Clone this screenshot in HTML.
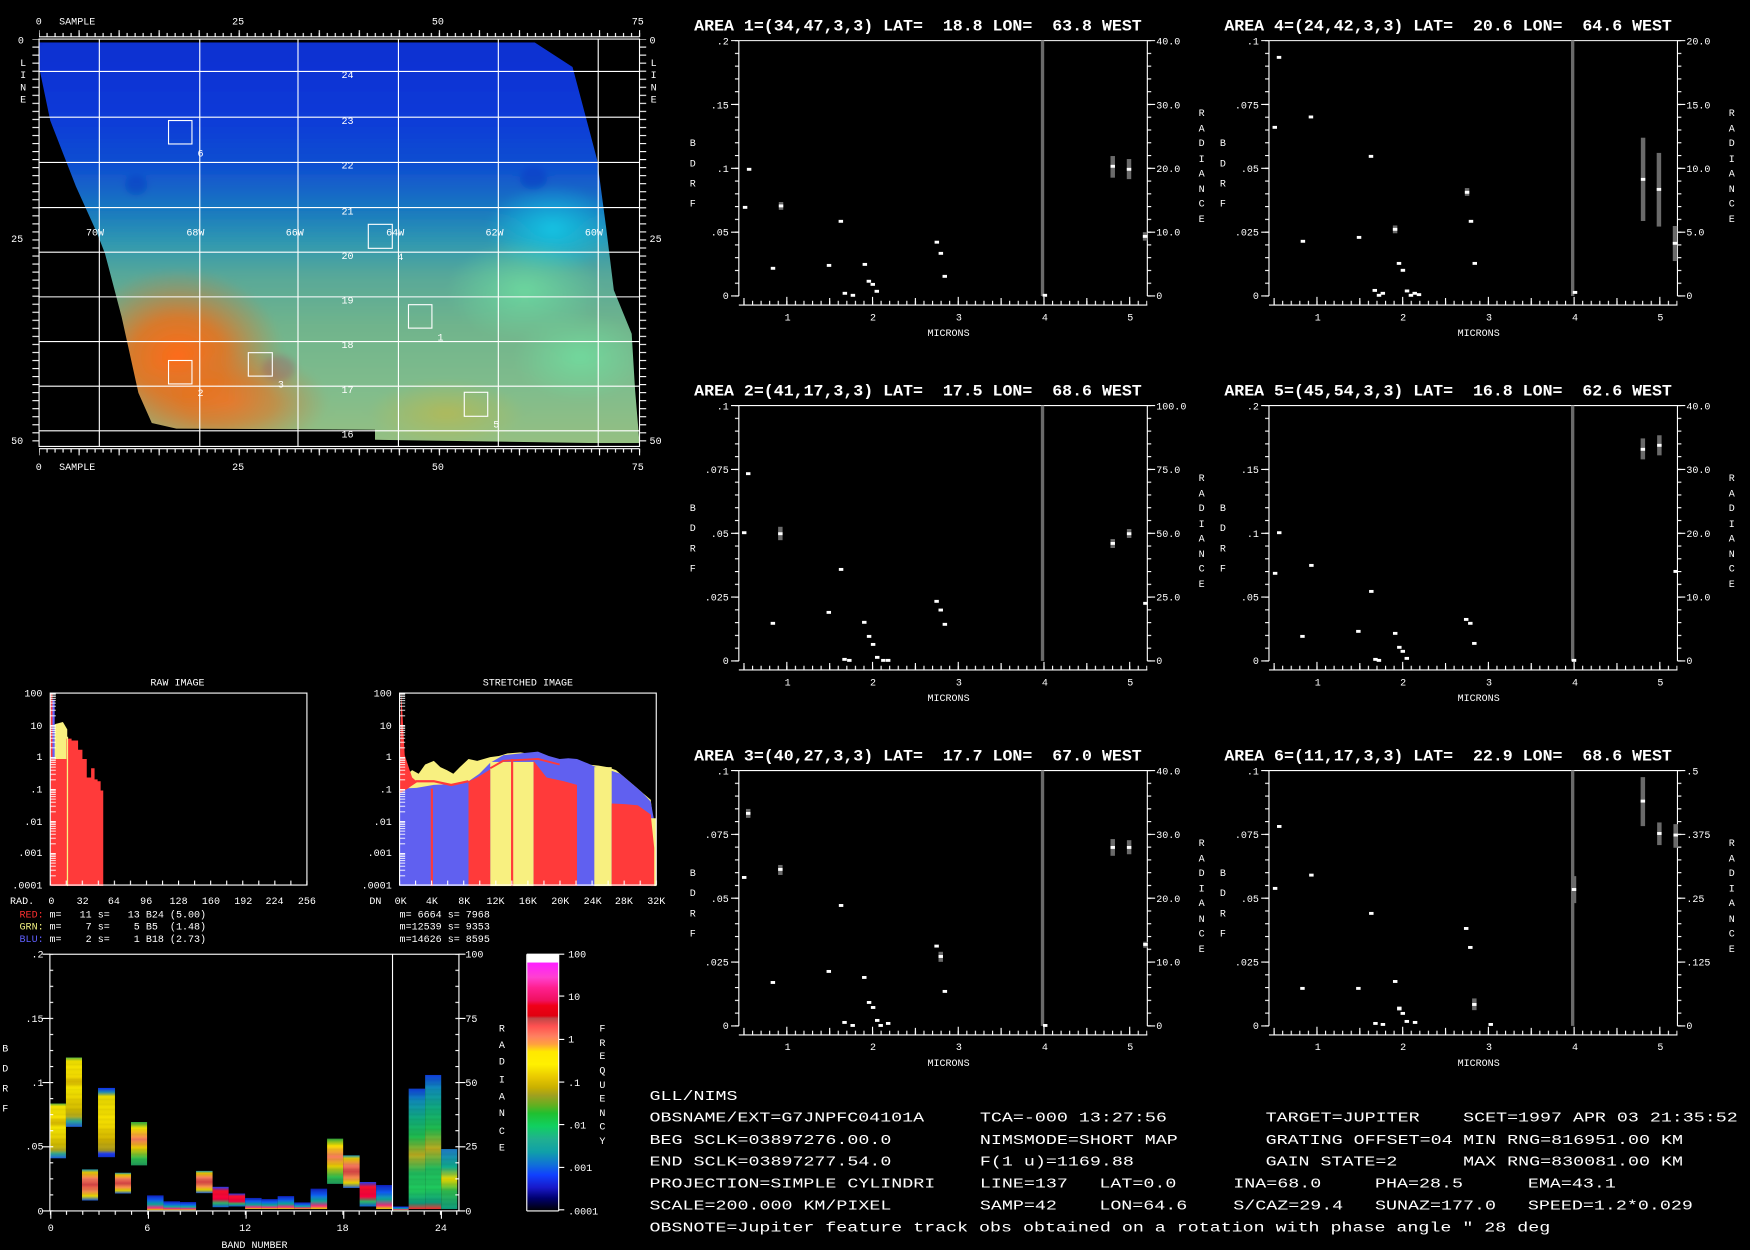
<!DOCTYPE html>
<html><head><meta charset="utf-8">
<style>
html,body{margin:0;padding:0;background:#000;}
svg{display:block;}
text{font-family:"Liberation Mono","DejaVu Sans Mono",monospace;fill:#fff;white-space:pre;}
.t9{font-size:9px;}
.ti{font-size:14px;font-weight:bold;}
.bt{font-size:12px;}
</style></head>
<body>
<svg width="1750" height="1250" viewBox="0 0 1568 1120" xmlns="http://www.w3.org/2000/svg">
<defs>
 <pattern id="vt" patternUnits="userSpaceOnUse" x="0" y="35.9" width="10" height="11.44"><rect x="0" y="0" width="10" height="1" fill="#fff"/></pattern>
 <pattern id="ht" patternUnits="userSpaceOnUse" x="704.5" y="0" width="7.68" height="20"><rect x="0" y="0" width="1" height="20" fill="#fff"/></pattern>
 <pattern id="mt" patternUnits="userSpaceOnUse" x="34.5" y="0" width="7.173" height="20"><rect x="0" y="0" width="1" height="20" fill="#fff"/></pattern>
 <pattern id="mT" patternUnits="userSpaceOnUse" x="34.5" y="0" width="35.87" height="20"><rect x="0" y="0" width="1" height="20" fill="#fff"/></pattern>
 <pattern id="ml" patternUnits="userSpaceOnUse" x="0" y="34.5" width="20" height="7.2"><rect x="0" y="0" width="20" height="1" fill="#fff"/></pattern>
 <pattern id="lg" patternUnits="userSpaceOnUse" x="0" y="621" width="20" height="28.67">
  <rect x="0" y="0" width="20" height="1" fill="#fff"/>
  <rect x="0" y="1.3" width="20" height="0.8" fill="#fff"/><rect x="0" y="2.8" width="20" height="0.8" fill="#fff"/>
  <rect x="0" y="4.4" width="20" height="0.8" fill="#fff"/><rect x="0" y="6.4" width="20" height="0.8" fill="#fff"/>
  <rect x="0" y="8.6" width="20" height="0.8" fill="#fff"/><rect x="0" y="11.4" width="20" height="0.8" fill="#fff"/>
  <rect x="0" y="15" width="20" height="0.8" fill="#fff"/><rect x="0" y="20" width="20" height="0.8" fill="#fff"/>
 </pattern>
 <pattern id="hx" patternUnits="userSpaceOnUse" x="44.5" y="0" width="14.375" height="20"><rect x="0" y="0" width="1" height="20" fill="#fff"/></pattern>
 <pattern id="hx2" patternUnits="userSpaceOnUse" x="357.5" y="0" width="14.375" height="20"><rect x="0" y="0" width="1" height="20" fill="#fff"/></pattern>
 <pattern id="bx" patternUnits="userSpaceOnUse" x="44.5" y="0" width="14.57" height="20"><rect x="0" y="0" width="1" height="20" fill="#fff"/></pattern>
 <pattern id="by" patternUnits="userSpaceOnUse" x="0" y="854.5" width="20" height="14.375"><rect x="0" y="0" width="20" height="1" fill="#fff"/></pattern>
 <pattern id="stripe" patternUnits="userSpaceOnUse" x="0" y="0" width="10" height="3"><rect x="0" y="0" width="10" height="1" fill="#000" opacity="0.18"/></pattern>

 <linearGradient id="mapg" x1="0" y1="0" x2="0" y2="1">
  <stop offset="0" stop-color="#0a2ed0"/><stop offset="0.2" stop-color="#0c3ad8"/>
  <stop offset="0.32" stop-color="#1050d0"/><stop offset="0.42" stop-color="#1878c0"/>
  <stop offset="0.5" stop-color="#3098b0"/><stop offset="0.58" stop-color="#58a898"/>
  <stop offset="0.7" stop-color="#70b48c"/><stop offset="0.85" stop-color="#80bc8c"/>
  <stop offset="1" stop-color="#98c080"/>
 </linearGradient>
 <radialGradient id="org" cx="0.5" cy="0.5" r="0.5">
  <stop offset="0" stop-color="#ff6a18" stop-opacity="1"/><stop offset="0.45" stop-color="#e8701c" stop-opacity="0.85"/>
  <stop offset="1" stop-color="#c88040" stop-opacity="0"/>
 </radialGradient>
 <radialGradient id="cyn" cx="0.5" cy="0.5" r="0.5">
  <stop offset="0" stop-color="#10c8e8" stop-opacity="0.9"/><stop offset="1" stop-color="#10c8e8" stop-opacity="0"/>
 </radialGradient>
 <radialGradient id="lgr" cx="0.5" cy="0.5" r="0.5">
  <stop offset="0" stop-color="#70e0a0" stop-opacity="0.8"/><stop offset="1" stop-color="#70e0a0" stop-opacity="0"/>
 </radialGradient>
 <radialGradient id="ylw" cx="0.5" cy="0.5" r="0.5">
  <stop offset="0" stop-color="#b8b850" stop-opacity="0.8"/><stop offset="1" stop-color="#b8b850" stop-opacity="0"/>
 </radialGradient>
 <filter id="bl" x="-5%" y="-5%" width="110%" height="110%"><feGaussianBlur stdDeviation="3"/></filter>
 <clipPath id="mc"><polygon points="35,38 479,38 513,60 535,143 543,203 550,260 566,299 569,349 573,397 535,397 336,394 336,385 158,384 136,379 124,352 109,284 94,227 87,209 68,167 45,108 35,60"/></clipPath>

 <linearGradient id="cb" x1="0" y1="0" x2="0" y2="1">
  <stop offset="0" stop-color="#fff"/><stop offset="0.03" stop-color="#fff"/>
  <stop offset="0.035" stop-color="#ff20ff"/><stop offset="0.09" stop-color="#ff40d0"/>
  <stop offset="0.13" stop-color="#ff2090"/><stop offset="0.18" stop-color="#f01060"/>
  <stop offset="0.2" stop-color="#f00018"/><stop offset="0.24" stop-color="#e00010"/>
  <stop offset="0.25" stop-color="#c04848"/><stop offset="0.28" stop-color="#ff5050"/>
  <stop offset="0.32" stop-color="#ff8060"/><stop offset="0.35" stop-color="#ffa040"/>
  <stop offset="0.38" stop-color="#ffe800"/><stop offset="0.43" stop-color="#fff000"/>
  <stop offset="0.48" stop-color="#e8c800"/><stop offset="0.52" stop-color="#c8b000"/>
  <stop offset="0.55" stop-color="#a0a020"/><stop offset="0.59" stop-color="#60b020"/>
  <stop offset="0.62" stop-color="#20c030"/><stop offset="0.67" stop-color="#10d060"/>
  <stop offset="0.72" stop-color="#20b090"/><stop offset="0.77" stop-color="#10a0a8"/>
  <stop offset="0.82" stop-color="#1070d8"/><stop offset="0.86" stop-color="#1040ff"/>
  <stop offset="0.91" stop-color="#1818c8"/><stop offset="0.95" stop-color="#000070"/>
  <stop offset="1" stop-color="#000"/>
 </linearGradient>
 <linearGradient id="gy" x1="0" y1="0" x2="0" y2="1">
  <stop offset="0" stop-color="#60c040"/><stop offset="0.05" stop-color="#f8e800"/>
  <stop offset="0.25" stop-color="#ffe800"/><stop offset="0.35" stop-color="#e0c000"/>
  <stop offset="0.45" stop-color="#fff000"/><stop offset="0.6" stop-color="#f0d800"/>
  <stop offset="0.75" stop-color="#d8c000"/><stop offset="0.85" stop-color="#b8b020"/>
  <stop offset="0.92" stop-color="#30b0a0"/><stop offset="1" stop-color="#2060e0"/>
 </linearGradient>
 <linearGradient id="gb" x1="0" y1="0" x2="0" y2="1">
  <stop offset="0" stop-color="#1030ff"/><stop offset="0.06" stop-color="#2090c0"/>
  <stop offset="0.12" stop-color="#f0e000"/><stop offset="0.5" stop-color="#ffe800"/>
  <stop offset="0.75" stop-color="#d8b800"/><stop offset="0.9" stop-color="#b0a020"/>
  <stop offset="0.95" stop-color="#2040ff"/><stop offset="1" stop-color="#1030d0"/>
 </linearGradient>
 <linearGradient id="gs" x1="0" y1="0" x2="0" y2="1">
  <stop offset="0" stop-color="#20a0c0"/><stop offset="0.1" stop-color="#f0d000"/>
  <stop offset="0.3" stop-color="#ff8060"/><stop offset="0.5" stop-color="#e04848"/>
  <stop offset="0.7" stop-color="#ff9050"/><stop offset="0.85" stop-color="#f0e000"/>
  <stop offset="1" stop-color="#2060e0"/>
 </linearGradient>
 <linearGradient id="gr" x1="0" y1="0" x2="0" y2="1">
  <stop offset="0" stop-color="#2040ff"/><stop offset="0.2" stop-color="#ff1030"/>
  <stop offset="0.6" stop-color="#ff0040"/><stop offset="0.8" stop-color="#30c070"/>
  <stop offset="1" stop-color="#1060e0"/>
 </linearGradient>
 <linearGradient id="gl" x1="0" y1="0" x2="0" y2="1">
  <stop offset="0" stop-color="#1020c0"/><stop offset="0.3" stop-color="#1060ff"/>
  <stop offset="0.6" stop-color="#10b0a0"/><stop offset="0.85" stop-color="#ff3080"/>
  <stop offset="1" stop-color="#f0e000"/>
 </linearGradient>
 <linearGradient id="gg" x1="0" y1="0" x2="0" y2="1">
  <stop offset="0" stop-color="#1040e0"/><stop offset="0.1" stop-color="#1090c0"/>
  <stop offset="0.25" stop-color="#10b080"/><stop offset="0.4" stop-color="#20c050"/>
  <stop offset="0.55" stop-color="#c0b020"/><stop offset="0.7" stop-color="#20c060"/>
  <stop offset="0.85" stop-color="#20d060"/><stop offset="0.95" stop-color="#10a080"/>
  <stop offset="1" stop-color="#ff3030"/>
 </linearGradient>
 <linearGradient id="gg2" x1="0" y1="0" x2="0" y2="1">
  <stop offset="0" stop-color="#2080d0"/><stop offset="0.3" stop-color="#10b090"/>
  <stop offset="0.5" stop-color="#f0e000"/><stop offset="0.7" stop-color="#30c050"/>
  <stop offset="1" stop-color="#10a080"/>
 </linearGradient>
 <linearGradient id="go" x1="0" y1="0" x2="0" y2="1">
  <stop offset="0" stop-color="#30b040"/><stop offset="0.15" stop-color="#ffe800"/>
  <stop offset="0.4" stop-color="#ff8060"/><stop offset="0.6" stop-color="#f0d000"/>
  <stop offset="0.85" stop-color="#30c050"/><stop offset="1" stop-color="#20a060"/>
 </linearGradient>

 <g id="pf">
  <path d="M662 36.4H1028V265.2M662 36.4V265.2M662 273.3H1028" stroke="#fff" stroke-width="1" fill="none"/>
  <path d="M655 36.4h7M655 93.6h7M655 150.8h7M655 208h7M655 265.2h7M1028 36.4h7M1028 93.6h7M1028 150.8h7M1028 208h7M1028 265.2h7" stroke="#fff" stroke-width="1"/>
  <rect x="658.5" y="36" width="3.5" height="230" fill="url(#vt)"/>
  <rect x="1028" y="36" width="3.5" height="230" fill="url(#vt)"/>
  <rect x="662" y="269.5" width="366" height="3.8" fill="url(#ht)"/>
  <path d="M705 266v7M781.8 266v7M858.6 266v7M935.4 266v7M1012.2 266v7M666.6 267v6M743.4 267v6M820.2 267v6M897 267v6M973.8 267v6" stroke="#fff" stroke-width="1"/>
  <rect x="932.6" y="36.4" width="3" height="228.8" fill="#6a6a6a"/>
 </g>
 <rect id="p" x="-2" y="-1.3" width="4" height="2.6" fill="#fff"/>
</defs>

<!-- ================= MAP ================= -->
<g clip-path="url(#mc)">
 <g filter="url(#bl)">
  <rect x="30" y="30" width="550" height="375" fill="url(#mapg)"/>
  <ellipse cx="160" cy="320" rx="95" ry="80" fill="url(#org)"/>
  <ellipse cx="205" cy="360" rx="90" ry="45" fill="url(#org)" opacity="0.7"/>
  <ellipse cx="495" cy="205" rx="60" ry="40" fill="url(#cyn)"/>
  <ellipse cx="470" cy="260" rx="70" ry="45" fill="url(#lgr)"/>
  <ellipse cx="520" cy="320" rx="60" ry="40" fill="url(#lgr)"/>
  <ellipse cx="400" cy="370" rx="70" ry="30" fill="url(#ylw)"/>
  <ellipse cx="478" cy="160" rx="12" ry="10" fill="#0020c0" opacity="0.3"/>
  <ellipse cx="122" cy="166" rx="10" ry="9" fill="#0020c0" opacity="0.3"/>
  <ellipse cx="250" cy="330" rx="15" ry="12" fill="#a05060" opacity="0.35"/>
 </g>
</g>
<g stroke="#fff" stroke-width="1" fill="none">
 <rect x="35" y="35" width="538" height="365"/>
 <path d="M35 64H573M35 105H573M35 145.5H573M35 186H573M35 226H573M35 266H573M35 306H573M35 346H573M35 386H573"/>
 <path d="M89 35V400M179 35V400M267 35V400M357 35V400M446.5 35V400M536 35V400"/>
 <path d="M35 33H573M35 402H573"/>
 <rect x="151" y="108" width="21" height="21"/><rect x="330" y="201" width="21.5" height="21.5"/>
 <rect x="366" y="273" width="21" height="21"/><rect x="151" y="323" width="21" height="21"/>
 <rect x="222.5" y="316" width="21.5" height="21"/><rect x="416" y="351.5" width="21" height="21.5"/>
</g>
<rect x="35" y="29.5" width="539" height="3.5" fill="url(#mt)"/>
<rect x="35" y="27" width="539" height="6" fill="url(#mT)"/>
<rect x="35" y="402" width="539" height="3.5" fill="url(#mt)"/>
<rect x="35" y="402" width="539" height="6" fill="url(#mT)"/>
<rect x="29" y="35" width="6" height="366" fill="url(#ml)"/>
<rect x="573" y="35" width="6" height="366" fill="url(#ml)"/>
<g class="t9">
 <text x="32" y="22">0</text><text x="53" y="22">SAMPLE</text><text x="208" y="22">25</text><text x="387" y="22">50</text><text x="566" y="22">75</text>
 <text x="32" y="421">0</text><text x="53" y="421">SAMPLE</text><text x="208" y="421">25</text><text x="387" y="421">50</text><text x="566" y="421">75</text>
 <text x="16" y="39">0</text><text x="10" y="217">25</text><text x="10" y="398">50</text>
 <text x="582" y="39">0</text><text x="582" y="217">25</text><text x="582" y="398">50</text>
 <text x="18" y="59">L</text><text x="18" y="70">I</text><text x="18" y="81">N</text><text x="18" y="92">E</text>
 <text x="583" y="59">L</text><text x="583" y="70">I</text><text x="583" y="81">N</text><text x="583" y="92">E</text>
 <text x="306" y="70">24</text><text x="306" y="111">23</text><text x="306" y="151">22</text><text x="306" y="192">21</text>
 <text x="306" y="232">20</text><text x="306" y="272">19</text><text x="306" y="312">18</text><text x="306" y="352">17</text><text x="306" y="392">16</text>
 <text x="77" y="211">70W</text><text x="167" y="211">68W</text><text x="256" y="211">66W</text><text x="346" y="211">64W</text><text x="435" y="211">62W</text><text x="524" y="211">60W</text>
 <text x="177" y="140">6</text><text x="356" y="233">4</text><text x="392" y="305">1</text>
 <text x="177" y="355">2</text><text x="249" y="347">3</text><text x="442" y="383">5</text>
</g>

<!-- ================= SPECTRAL PLOTS ================= -->
<use href="#pf"/>
<use href="#pf" transform="translate(475,0)"/>
<use href="#pf" transform="translate(0,327)"/>
<use href="#pf" transform="translate(475,327)"/>
<use href="#pf" transform="translate(0,654)"/>
<use href="#pf" transform="translate(475,654)"/>

<g class="ti">
 <text x="622" y="27.5" textLength="401" lengthAdjust="spacingAndGlyphs">AREA 1=(34,47,3,3) LAT=  18.8 LON=  63.8 WEST</text>
 <text x="1097" y="27.5" textLength="401" lengthAdjust="spacingAndGlyphs">AREA 4=(24,42,3,3) LAT=  20.6 LON=  64.6 WEST</text>
 <text x="622" y="354.5" textLength="401" lengthAdjust="spacingAndGlyphs">AREA 2=(41,17,3,3) LAT=  17.5 LON=  68.6 WEST</text>
 <text x="1097" y="354.5" textLength="401" lengthAdjust="spacingAndGlyphs">AREA 5=(45,54,3,3) LAT=  16.8 LON=  62.6 WEST</text>
 <text x="622" y="681.5" textLength="401" lengthAdjust="spacingAndGlyphs">AREA 3=(40,27,3,3) LAT=  17.7 LON=  67.0 WEST</text>
 <text x="1097" y="681.5" textLength="401" lengthAdjust="spacingAndGlyphs">AREA 6=(11,17,3,3) LAT=  22.9 LON=  68.6 WEST</text>
</g>

<g class="t9">
 <g text-anchor="end"><text x="653" y="40">.2</text><text x="653" y="97">.15</text><text x="653" y="154">.1</text><text x="653" y="211">.05</text><text x="653" y="268">0</text></g>
 <text x="1036" y="40">40.0</text><text x="1036" y="97">30.0</text><text x="1036" y="154">20.0</text><text x="1036" y="211">10.0</text><text x="1036" y="268">0</text>
 <g text-anchor="end"><text x="1128" y="40">.1</text><text x="1128" y="97">.075</text><text x="1128" y="154">.05</text><text x="1128" y="211">.025</text><text x="1128" y="268">0</text></g>
 <text x="1511" y="40">20.0</text><text x="1511" y="97">15.0</text><text x="1511" y="154">10.0</text><text x="1511" y="211">5.0</text><text x="1511" y="268">0</text>
 <g text-anchor="end"><text x="653" y="367">.1</text><text x="653" y="424">.075</text><text x="653" y="481">.05</text><text x="653" y="538">.025</text><text x="653" y="595">0</text></g>
 <text x="1036" y="367">100.0</text><text x="1036" y="424">75.0</text><text x="1036" y="481">50.0</text><text x="1036" y="538">25.0</text><text x="1036" y="595">0</text>
 <g text-anchor="end"><text x="1128" y="367">.2</text><text x="1128" y="424">.15</text><text x="1128" y="481">.1</text><text x="1128" y="538">.05</text><text x="1128" y="595">0</text></g>
 <text x="1511" y="367">40.0</text><text x="1511" y="424">30.0</text><text x="1511" y="481">20.0</text><text x="1511" y="538">10.0</text><text x="1511" y="595">0</text>
 <g text-anchor="end"><text x="653" y="694">.1</text><text x="653" y="751">.075</text><text x="653" y="808">.05</text><text x="653" y="865">.025</text><text x="653" y="922">0</text></g>
 <text x="1036" y="694">40.0</text><text x="1036" y="751">30.0</text><text x="1036" y="808">20.0</text><text x="1036" y="865">10.0</text><text x="1036" y="922">0</text>
 <g text-anchor="end"><text x="1128" y="694">.1</text><text x="1128" y="751">.075</text><text x="1128" y="808">.05</text><text x="1128" y="865">.025</text><text x="1128" y="922">0</text></g>
 <text x="1511" y="694">.5</text><text x="1511" y="751">.375</text><text x="1511" y="808">.25</text><text x="1511" y="865">.125</text><text x="1511" y="922">0</text>

 <g>
  <text x="703" y="287">1</text><text x="779.5" y="287">2</text><text x="856.5" y="287">3</text><text x="933.5" y="287">4</text><text x="1010" y="287">5</text>
  <text x="831" y="301">MICRONS</text>
  <text x="618" y="131">B</text><text x="618" y="149">D</text><text x="618" y="167">R</text><text x="618" y="185">F</text>
  <text x="1074" y="104">R</text><text x="1074" y="118">A</text><text x="1074" y="131">D</text><text x="1074" y="145">I</text><text x="1074" y="158">A</text><text x="1074" y="172">N</text><text x="1074" y="185">C</text><text x="1074" y="199">E</text>
 </g>
 <g transform="translate(475,0)">
  <text x="703" y="287">1</text><text x="779.5" y="287">2</text><text x="856.5" y="287">3</text><text x="933.5" y="287">4</text><text x="1010" y="287">5</text>
  <text x="831" y="301">MICRONS</text>
  <text x="618" y="131">B</text><text x="618" y="149">D</text><text x="618" y="167">R</text><text x="618" y="185">F</text>
  <text x="1074" y="104">R</text><text x="1074" y="118">A</text><text x="1074" y="131">D</text><text x="1074" y="145">I</text><text x="1074" y="158">A</text><text x="1074" y="172">N</text><text x="1074" y="185">C</text><text x="1074" y="199">E</text>
 </g>
 <g transform="translate(0,327)">
  <text x="703" y="287">1</text><text x="779.5" y="287">2</text><text x="856.5" y="287">3</text><text x="933.5" y="287">4</text><text x="1010" y="287">5</text>
  <text x="831" y="301">MICRONS</text>
  <text x="618" y="131">B</text><text x="618" y="149">D</text><text x="618" y="167">R</text><text x="618" y="185">F</text>
  <text x="1074" y="104">R</text><text x="1074" y="118">A</text><text x="1074" y="131">D</text><text x="1074" y="145">I</text><text x="1074" y="158">A</text><text x="1074" y="172">N</text><text x="1074" y="185">C</text><text x="1074" y="199">E</text>
 </g>
 <g transform="translate(475,327)">
  <text x="703" y="287">1</text><text x="779.5" y="287">2</text><text x="856.5" y="287">3</text><text x="933.5" y="287">4</text><text x="1010" y="287">5</text>
  <text x="831" y="301">MICRONS</text>
  <text x="618" y="131">B</text><text x="618" y="149">D</text><text x="618" y="167">R</text><text x="618" y="185">F</text>
  <text x="1074" y="104">R</text><text x="1074" y="118">A</text><text x="1074" y="131">D</text><text x="1074" y="145">I</text><text x="1074" y="158">A</text><text x="1074" y="172">N</text><text x="1074" y="185">C</text><text x="1074" y="199">E</text>
 </g>
 <g transform="translate(0,654)">
  <text x="703" y="287">1</text><text x="779.5" y="287">2</text><text x="856.5" y="287">3</text><text x="933.5" y="287">4</text><text x="1010" y="287">5</text>
  <text x="831" y="301">MICRONS</text>
  <text x="618" y="131">B</text><text x="618" y="149">D</text><text x="618" y="167">R</text><text x="618" y="185">F</text>
  <text x="1074" y="104">R</text><text x="1074" y="118">A</text><text x="1074" y="131">D</text><text x="1074" y="145">I</text><text x="1074" y="158">A</text><text x="1074" y="172">N</text><text x="1074" y="185">C</text><text x="1074" y="199">E</text>
 </g>
 <g transform="translate(475,654)">
  <text x="703" y="287">1</text><text x="779.5" y="287">2</text><text x="856.5" y="287">3</text><text x="933.5" y="287">4</text><text x="1010" y="287">5</text>
  <text x="831" y="301">MICRONS</text>
  <text x="618" y="131">B</text><text x="618" y="149">D</text><text x="618" y="167">R</text><text x="618" y="185">F</text>
  <text x="1074" y="104">R</text><text x="1074" y="118">A</text><text x="1074" y="131">D</text><text x="1074" y="145">I</text><text x="1074" y="158">A</text><text x="1074" y="172">N</text><text x="1074" y="185">C</text><text x="1074" y="199">E</text>
 </g>
</g>

<g fill="#6a6a6a">
 <rect x="697.8" y="181" width="4" height="7"/><rect x="995" y="139.8" width="4" height="19.4"/><rect x="1009.6" y="142.5" width="4" height="18"/><rect x="1024" y="208" width="4" height="7.6"/>
 <rect x="1248" y="202" width="4" height="7"/><rect x="1312.5" y="168.5" width="4" height="7"/><rect x="1470.2" y="123.4" width="4" height="74.6"/><rect x="1484.4" y="137" width="4" height="66"/><rect x="1498.8" y="202.5" width="4" height="31.4"/>
 <rect x="697.2" y="472" width="4" height="12"/><rect x="995" y="483" width="4" height="8"/><rect x="1009.7" y="474" width="4" height="8"/>
 <rect x="1470" y="392.8" width="4" height="18.8"/><rect x="1484.8" y="390" width="4" height="18"/>
 <rect x="668.4" y="724.8" width="4" height="8"/><rect x="697.2" y="775" width="4" height="9"/><rect x="840.9" y="852.8" width="4" height="9"/><rect x="995" y="751.8" width="4" height="15"/><rect x="1009.7" y="752.8" width="4" height="12.6"/><rect x="1024.3" y="843.8" width="4" height="5.4"/>
 <rect x="1251.8" y="901.5" width="4" height="4.3"/><rect x="1319" y="894.6" width="4" height="10.5"/><rect x="1408.3" y="785" width="4" height="24.2"/><rect x="1470" y="696.3" width="4" height="43.9"/><rect x="1484.8" y="736.9" width="4" height="20.3"/><rect x="1499.4" y="738.4" width="4" height="21.2"/>
</g>
<g>
 <use href="#p" x="667.6" y="185.8"/><use href="#p" x="671.2" y="151.7"/><use href="#p" x="692.6" y="240.4"/><use href="#p" x="699.8" y="184.5"/><use href="#p" x="742.8" y="237.8"/><use href="#p" x="753.4" y="198.3"/><use href="#p" x="757" y="262.8"/><use href="#p" x="764.2" y="264.6"/><use href="#p" x="774.9" y="236.9"/><use href="#p" x="778.5" y="252"/><use href="#p" x="782" y="254.8"/><use href="#p" x="785.6" y="261"/><use href="#p" x="839.4" y="217"/><use href="#p" x="843" y="227"/><use href="#p" x="846.5" y="247.6"/><use href="#p" x="936.2" y="264.6"/><use href="#p" x="997" y="149"/><use href="#p" x="1011.6" y="151.7"/><use href="#p" x="1026" y="211.8"/>
 <use href="#p" x="1142.2" y="114.1"/><use href="#p" x="1146" y="51.4"/><use href="#p" x="1167.4" y="216.2"/><use href="#p" x="1174.6" y="104.8"/><use href="#p" x="1217.7" y="212.7"/><use href="#p" x="1228.4" y="140.1"/><use href="#p" x="1231.8" y="260.2"/><use href="#p" x="1235.6" y="264.6"/><use href="#p" x="1239" y="262.8"/><use href="#p" x="1250" y="205.5"/><use href="#p" x="1253.5" y="236"/><use href="#p" x="1257" y="242.2"/><use href="#p" x="1260.7" y="260.7"/><use href="#p" x="1264.2" y="264.6"/><use href="#p" x="1267.6" y="262.8"/><use href="#p" x="1271.4" y="264"/><use href="#p" x="1314.5" y="172.3"/><use href="#p" x="1318" y="198.3"/><use href="#p" x="1321.4" y="236"/><use href="#p" x="1411.2" y="262"/><use href="#p" x="1472.2" y="160.7"/><use href="#p" x="1486.4" y="169.7"/><use href="#p" x="1500.8" y="218"/>
 <use href="#p" x="666.8" y="477.3"/><use href="#p" x="670.4" y="424.4"/><use href="#p" x="692.5" y="558.5"/><use href="#p" x="699.2" y="478.2"/><use href="#p" x="742.6" y="548.7"/><use href="#p" x="753.6" y="510.2"/><use href="#p" x="756.7" y="590.8"/><use href="#p" x="761" y="591.7"/><use href="#p" x="774.4" y="557.6"/><use href="#p" x="778.7" y="570.2"/><use href="#p" x="782.3" y="577.4"/><use href="#p" x="786" y="589"/><use href="#p" x="791.5" y="591.7"/><use href="#p" x="795.8" y="591.7"/><use href="#p" x="839.2" y="538.8"/><use href="#p" x="842.9" y="546.6"/><use href="#p" x="846.6" y="559.4"/><use href="#p" x="997" y="486.9"/><use href="#p" x="1011.7" y="478.2"/><use href="#p" x="1026.3" y="540.6"/>
 <use href="#p" x="1142.5" y="513.7"/><use href="#p" x="1146.2" y="477.3"/><use href="#p" x="1167" y="570.2"/><use href="#p" x="1175" y="506.6"/><use href="#p" x="1217.1" y="565.7"/><use href="#p" x="1228.7" y="529.9"/><use href="#p" x="1232.4" y="590.8"/><use href="#p" x="1235.5" y="591.7"/><use href="#p" x="1250.1" y="567.5"/><use href="#p" x="1253.8" y="580"/><use href="#p" x="1256.9" y="583.6"/><use href="#p" x="1260.5" y="589.9"/><use href="#p" x="1313.7" y="555"/><use href="#p" x="1317.4" y="558.5"/><use href="#p" x="1321" y="576.5"/><use href="#p" x="1410.3" y="591.7"/><use href="#p" x="1472" y="402.6"/><use href="#p" x="1486.8" y="399"/><use href="#p" x="1501.4" y="512"/>
 <use href="#p" x="666.8" y="786.2"/><use href="#p" x="670.4" y="728.8"/><use href="#p" x="692.5" y="880.3"/><use href="#p" x="699.2" y="779"/><use href="#p" x="742.6" y="870.4"/><use href="#p" x="753.6" y="811.3"/><use href="#p" x="756.7" y="916.1"/><use href="#p" x="764" y="918.8"/><use href="#p" x="774.4" y="875.8"/><use href="#p" x="778.7" y="898.2"/><use href="#p" x="782.3" y="902.7"/><use href="#p" x="786" y="914.3"/><use href="#p" x="789.1" y="918.8"/><use href="#p" x="795.8" y="917"/><use href="#p" x="839.2" y="847.7"/><use href="#p" x="842.9" y="857"/><use href="#p" x="846.6" y="888.3"/><use href="#p" x="936.5" y="918.8"/><use href="#p" x="997" y="759.3"/><use href="#p" x="1011.7" y="759.3"/><use href="#p" x="1026.3" y="846.2"/>
 <use href="#p" x="1142.5" y="796"/><use href="#p" x="1146.2" y="740.5"/><use href="#p" x="1167" y="885.6"/><use href="#p" x="1175" y="784.1"/><use href="#p" x="1217.1" y="885.6"/><use href="#p" x="1228.7" y="818.4"/><use href="#p" x="1232.4" y="917"/><use href="#p" x="1239.1" y="917.9"/><use href="#p" x="1250.1" y="879.4"/><use href="#p" x="1253.8" y="903.6"/><use href="#p" x="1256.9" y="908"/><use href="#p" x="1260.5" y="915.2"/><use href="#p" x="1267.9" y="916.1"/><use href="#p" x="1313.7" y="831.9"/><use href="#p" x="1317.4" y="848.9"/><use href="#p" x="1321" y="900"/><use href="#p" x="1335.7" y="917.9"/><use href="#p" x="1410.3" y="797"/><use href="#p" x="1472" y="717.8"/><use href="#p" x="1486.8" y="746.8"/><use href="#p" x="1501.4" y="748.2"/>
</g>

<!-- ================= HISTOGRAMS ================= -->
<g class="t9">
 <text x="159" y="614" text-anchor="middle">RAW IMAGE</text>
 <text x="473" y="614" text-anchor="middle">STRETCHED IMAGE</text>
 <g text-anchor="end">
  <text x="38" y="624">100</text><text x="38" y="653">10</text><text x="38" y="681">1</text><text x="38" y="710">.1</text><text x="38" y="739">.01</text><text x="38" y="767">.001</text><text x="38" y="796">.0001</text>
  <text x="351" y="624">100</text><text x="351" y="653">10</text><text x="351" y="681">1</text><text x="351" y="710">.1</text><text x="351" y="739">.01</text><text x="351" y="767">.001</text><text x="351" y="796">.0001</text>
 </g>
 <text x="9" y="810">RAD.</text>
 <g text-anchor="middle">
  <text x="46" y="810">0</text><text x="74" y="810">32</text><text x="102" y="810">64</text><text x="131" y="810">96</text><text x="160" y="810">128</text><text x="189" y="810">160</text><text x="218" y="810">192</text><text x="246" y="810">224</text><text x="275" y="810">256</text>
  <text x="359" y="810">0K</text><text x="387" y="810">4K</text><text x="416" y="810">8K</text><text x="444" y="810">12K</text><text x="473" y="810">16K</text><text x="502" y="810">20K</text><text x="531" y="810">24K</text><text x="559" y="810">28K</text><text x="588" y="810">32K</text>
 </g>
 <text x="331" y="810">DN</text>
 <text x="17.5" y="822" style="fill:#ff3030">RED:</text><text x="39" y="822"> m=   11 s=   13 B24 (5.00)</text>
 <text x="17.5" y="833" style="fill:#f0f080">GRN:</text><text x="39" y="833"> m=    7 s=    5 B5  (1.48)</text>
 <text x="17.5" y="844" style="fill:#6060ff">BLU:</text><text x="39" y="844"> m=    2 s=    1 B18 (2.73)</text>
 <text x="358" y="822">m= 6664 s= 7968</text>
 <text x="358" y="833">m=12539 s= 9353</text>
 <text x="358" y="844">m=14626 s= 8595</text>
</g>
<g transform="translate(0,600.4) scale(0.3887,0.3319)">
 <path d="M117 583V150L130 145L145 140L155 160V583Z" fill="#f8f080"/>
 <rect x="117" y="80" width="9" height="503" fill="#6060ff"/>
 <path d="M117 583V62H121V240H153V185H165V190H180V215H190V240H200V290H210V265H218V295H225V300H232V325H238V583Z" fill="#ff3a3a"/>
 <rect x="154" y="180" width="3" height="403" fill="#f8f080"/>
 <path d="M921 583V300L935 285L950 270L965 280L980 255L1000 245L1015 262L1030 270L1045 280L1060 262L1080 240L1100 245L1130 235L1150 232L1170 225L1200 222L1230 228L1255 240L1280 250L1305 245L1330 250L1355 255L1380 258L1400 262L1420 270L1440 290L1460 310L1480 330L1500 350L1513 480V583Z" fill="#f8f080"/>
 <path d="M921 583V320L960 318L1000 310L1040 308L1080 300L1105 280L1130 250L1160 230L1200 225L1240 220L1265 232L1290 240L1310 238L1330 240L1355 252L1380 265L1405 270L1430 280L1460 310L1480 330L1500 355L1510 420V583Z" fill="#6060f0"/>
 <rect x="1130" y="248" width="100" height="335" fill="#f8f080"/>
 <rect x="1370" y="262" width="40" height="321" fill="#f8f080"/>
 <rect x="1500" y="400" width="13" height="183" fill="#f8f080"/>
 <path d="M1080 583V300L1100 290L1130 268V583Z" fill="#ff3a3a"/>
 <path d="M1230 583V245L1260 290L1300 300L1330 310V583Z" fill="#ff3a3a"/>
 <path d="M1410 583V360L1440 362L1470 365L1500 390L1508 480V583Z" fill="#ff3a3a"/>
 <path d="M921 583V300L925 62L933 230L950 290L960 300L940 320L921 330Z" fill="#ff3a3a"/>
 <path d="M921 330L960 300L1000 300L1040 310L1080 300" stroke="#ff3a3a" stroke-width="6" fill="none"/>
 <rect x="993" y="320" width="5" height="263" fill="#ff3a3a"/>
 <rect x="1178" y="240" width="5" height="343" fill="#ff3a3a"/>
 <path d="M1130 265L1160 245L1240 240L1290 255" stroke="#ff3a3a" stroke-width="5" fill="none"/>

 <rect x="115" y="1170" width="37" height="148" fill="url(#gy)"/>
 <rect x="152" y="1046" width="37" height="187" fill="url(#gy)"/>
 <rect x="189" y="1348" width="37" height="84" fill="url(#gs)"/>
 <rect x="226" y="1128" width="39" height="187" fill="url(#gb)"/>
 <rect x="265" y="1357" width="37" height="56" fill="url(#gs)"/>
 <rect x="302" y="1220" width="37" height="117" fill="url(#go)"/>
 <rect x="339" y="1418" width="38" height="40" fill="url(#gl)"/>
 <rect x="377" y="1434" width="38" height="24" fill="url(#gl)"/>
 <rect x="415" y="1436" width="37" height="22" fill="url(#gl)"/>
 <rect x="452" y="1352" width="38" height="60" fill="url(#gs)"/>
 <rect x="490" y="1395" width="37" height="55" fill="url(#gr)"/>
 <rect x="527" y="1413" width="38" height="35" fill="url(#gr)"/>
 <rect x="565" y="1425" width="38" height="30" fill="url(#gl)"/>
 <rect x="603" y="1428" width="37" height="27" fill="url(#gl)"/>
 <rect x="640" y="1420" width="38" height="35" fill="url(#gl)"/>
 <rect x="678" y="1437" width="38" height="18" fill="url(#gl)"/>
 <rect x="716" y="1400" width="38" height="55" fill="url(#gl)"/>
 <rect x="754" y="1265" width="37" height="122" fill="url(#go)"/>
 <rect x="791" y="1310" width="38" height="88" fill="url(#gs)"/>
 <rect x="829" y="1382" width="38" height="66" fill="url(#gr)"/>
 <rect x="867" y="1390" width="38" height="65" fill="url(#gl)"/>
 <rect x="905" y="1448" width="37" height="10" fill="url(#gl)"/>
 <rect x="942" y="1130" width="38" height="325" fill="url(#gg)"/>
 <rect x="980" y="1093" width="37" height="362" fill="url(#gg)"/>
 <rect x="1017" y="1293" width="37" height="162" fill="url(#gg2)"/>
 <rect x="115" y="1040" width="940" height="420" fill="url(#stripe)"/>
 <rect x="1215" y="767" width="73" height="693" fill="url(#cb)"/>
</g>
<g stroke="#fff" stroke-width="1" fill="none">
 <rect x="45" y="621" width="230" height="172"/>
 <rect x="358" y="621" width="230" height="172"/>
 <rect x="44.7" y="855" width="366.5" height="230"/>
 <path d="M351.7 855V1085"/>
 <path d="M472 855V1085M500.6 855V1085M472 855H500.6M472 1085H500.6"/>
 <path d="M500.6 855h5M500.6 892.5h5M500.6 931.3h5M500.6 969.5h5M500.6 1007.6h5M500.6 1046h5M500.6 1084h5"/>
 <path d="M45.5 1085v7M133 1085v7M220.5 1085v7M308 1085v7M395.5 1085v7"/>
 <path d="M38 855h7M38 912.5h7M38 970h7M38 1027.5h7M38 1085h7M411 855h6M411 912.5h6M411 970h6M411 1027.5h6M411 1085h6"/>
</g>
<rect x="45" y="621" width="5" height="172" fill="url(#lg)"/>
<rect x="358" y="621" width="5" height="172" fill="url(#lg)"/>
<rect x="45" y="789" width="231" height="4" fill="url(#hx)"/>
<rect x="358" y="789" width="231" height="4" fill="url(#hx2)"/>
<rect x="44.7" y="1085" width="367" height="3.5" fill="url(#bx)"/>
<rect x="44.7" y="855" width="3" height="230" fill="url(#by)"/>
<rect x="408" y="855" width="3" height="230" fill="url(#by)"/>

<g class="t9">
 <g text-anchor="end"><text x="39" y="858">.2</text><text x="39" y="915.5">.15</text><text x="39" y="973">.1</text><text x="39" y="1030">.05</text><text x="39" y="1088">0</text></g>
 <text x="417" y="858">100</text><text x="417" y="915.5">75</text><text x="417" y="973">50</text><text x="417" y="1030">25</text><text x="417" y="1088">0</text>
 <g text-anchor="middle"><text x="45.5" y="1103">0</text><text x="132" y="1103">6</text><text x="219.6" y="1103">12</text><text x="307" y="1103">18</text><text x="395" y="1103">24</text>
 <text x="228" y="1118">BAND NUMBER</text></g>
 <text x="2" y="942">B</text><text x="2" y="960">D</text><text x="2" y="978">R</text><text x="2" y="996">F</text>
 <text x="447" y="924">R</text><text x="447" y="939">A</text><text x="447" y="954">D</text><text x="447" y="970">I</text><text x="447" y="985">A</text><text x="447" y="1000">N</text><text x="447" y="1016">C</text><text x="447" y="1031">E</text>
 <text x="537" y="924">F</text><text x="537" y="937">R</text><text x="537" y="949">E</text><text x="537" y="962">Q</text><text x="537" y="975">U</text><text x="537" y="987">E</text><text x="537" y="1000">N</text><text x="537" y="1012">C</text><text x="537" y="1025">Y</text>
 <text x="509" y="858">100</text><text x="509" y="896">10</text><text x="509" y="934">1</text><text x="509" y="973">.1</text><text x="509" y="1011">.01</text><text x="509" y="1049">.001</text><text x="509" y="1088">.0001</text>
</g>

<!-- ================= BOTTOM TEXT ================= -->
<g class="bt">
 <text x="582" y="985.4" textLength="78.8" lengthAdjust="spacingAndGlyphs">GLL/NIMS</text>
 <text x="582" y="1004.8" textLength="246" lengthAdjust="spacingAndGlyphs">OBSNAME/EXT=G7JNPFC04101A</text>
 <text x="878" y="1004.8" textLength="167.5" lengthAdjust="spacingAndGlyphs">TCA=-000 13:27:56</text>
 <text x="1134" y="1004.8" textLength="138" lengthAdjust="spacingAndGlyphs">TARGET=JUPITER</text>
 <text x="1311" y="1004.8" textLength="246" lengthAdjust="spacingAndGlyphs">SCET=1997 APR 03 21:35:52</text>

 <text x="582" y="1024.8" textLength="216.7" lengthAdjust="spacingAndGlyphs">BEG SCLK=03897276.00.0</text>
 <text x="878" y="1024.8" textLength="177.3" lengthAdjust="spacingAndGlyphs">NIMSMODE=SHORT MAP</text>
 <text x="1134" y="1024.8" textLength="167.5" lengthAdjust="spacingAndGlyphs">GRATING OFFSET=04</text>
 <text x="1311" y="1024.8" textLength="197" lengthAdjust="spacingAndGlyphs">MIN RNG=816951.00 KM</text>

 <text x="582" y="1044.2" textLength="216.7" lengthAdjust="spacingAndGlyphs">END SCLK=03897277.54.0</text>
 <text x="878" y="1044.2" textLength="138" lengthAdjust="spacingAndGlyphs">F(1 u)=1169.88</text>
 <text x="1134" y="1044.2" textLength="118" lengthAdjust="spacingAndGlyphs">GAIN STATE=2</text>
 <text x="1311" y="1044.2" textLength="197" lengthAdjust="spacingAndGlyphs">MAX RNG=830081.00 KM</text>

 <text x="582" y="1063.9" textLength="256" lengthAdjust="spacingAndGlyphs">PROJECTION=SIMPLE CYLINDRI</text>
 <text x="878" y="1063.9" textLength="78.8" lengthAdjust="spacingAndGlyphs">LINE=137</text>
 <text x="985" y="1063.9" textLength="69" lengthAdjust="spacingAndGlyphs">LAT=0.0</text>
 <text x="1105" y="1063.9" textLength="78.8" lengthAdjust="spacingAndGlyphs">INA=68.0</text>
 <text x="1232" y="1063.9" textLength="78.8" lengthAdjust="spacingAndGlyphs">PHA=28.5</text>
 <text x="1369" y="1063.9" textLength="78.8" lengthAdjust="spacingAndGlyphs">EMA=43.1</text>

 <text x="582" y="1083.9" textLength="216.7" lengthAdjust="spacingAndGlyphs">SCALE=200.000 KM/PIXEL</text>
 <text x="878" y="1083.9" textLength="69" lengthAdjust="spacingAndGlyphs">SAMP=42</text>
 <text x="985" y="1083.9" textLength="78.8" lengthAdjust="spacingAndGlyphs">LON=64.6</text>
 <text x="1105" y="1083.9" textLength="98.5" lengthAdjust="spacingAndGlyphs">S/CAZ=29.4</text>
 <text x="1232" y="1083.9" textLength="108.4" lengthAdjust="spacingAndGlyphs">SUNAZ=177.0</text>
 <text x="1369" y="1083.9" textLength="147.8" lengthAdjust="spacingAndGlyphs">SPEED=1.2*0.029</text>

 <text x="582" y="1103.3" textLength="807" lengthAdjust="spacingAndGlyphs">OBSNOTE=Jupiter feature track obs obtained on a rotation with phase angle " 28 deg</text>
</g>
</svg>
</body></html>
